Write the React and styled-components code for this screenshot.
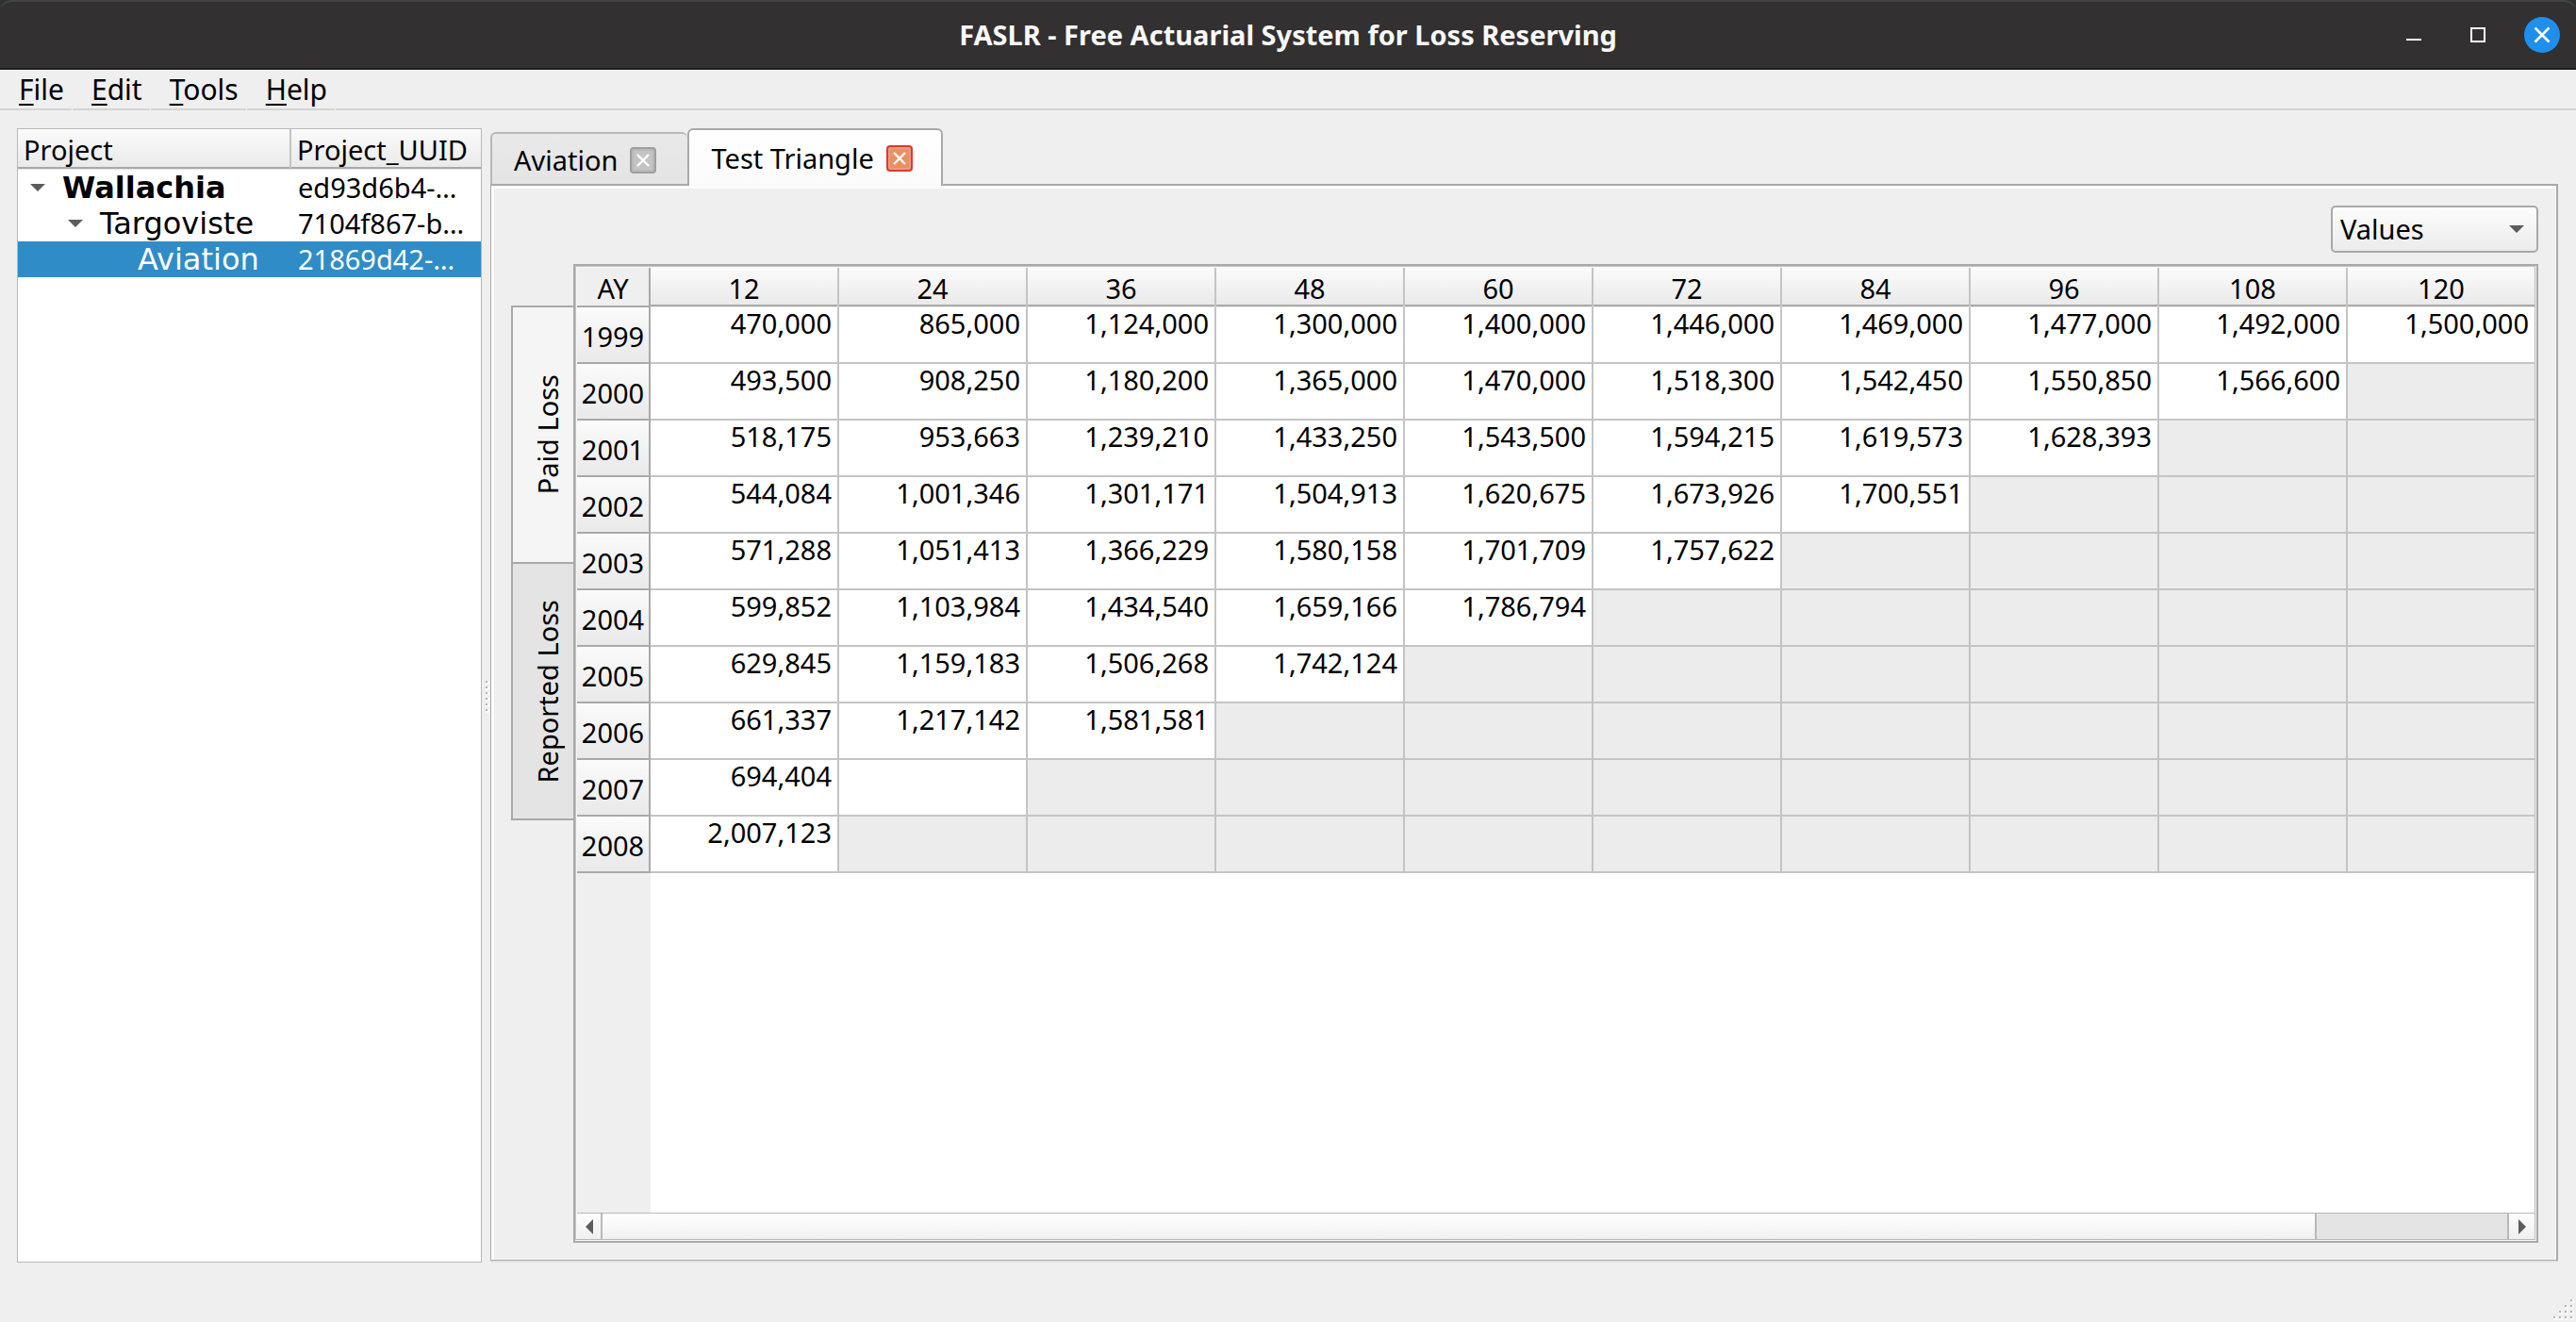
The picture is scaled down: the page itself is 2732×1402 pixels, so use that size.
import React, { useState } from "react";
import styled, { createGlobalStyle } from "styled-components";

const color = {
  window: "#efefef",
  title: "#323030",
  frame: "#a9a9a9",
  softFrame: "#b8b8b8",
  grid: "#c4c4c4",
  accent: "#308cc6",
  glyph: "#5c5c5c",
};
const headerFill = "linear-gradient(#fbfbfb, #f0f0f0 60%, #e9e9e9)";

const GlobalStyle = createGlobalStyle`
  *, *::before, *::after { box-sizing: border-box; }
  body {
    margin: 0;
    background: ${color.window};
    color: #000;
    font: 29px/34px "Noto Sans", "Open Sans", sans-serif;
  }
  button, select { font: inherit; color: inherit; }
  button { padding: 0; border: 0; background: none; }
`;

const Window = styled.div`
  display: flex;
  flex-direction: column;
  min-height: 100vh;
`;

const TitleBarBack = styled.div`
  background: #2b3135;
`;

const TitleBar = styled.header`
  display: grid;
  grid-template-columns: 1fr auto 1fr;
  align-items: center;
  height: 74px;
  padding: 0 17px;
  background: ${color.title};
  border-top: 2px solid #454344;
  border-bottom: 2px solid #1f1e1f;
  border-radius: 12px 12px 0 0;
`;

const Title = styled.h1`
  grid-column: 2;
  margin: 0;
  color: #f8f8f8;
  font-size: 29px;
  font-weight: 700;
`;

const WindowControls = styled.div`
  display: flex;
  justify-content: flex-end;
  gap: 30px;
`;

const WindowButton = styled.button`
  width: 38px;
  height: 38px;
  border-radius: 50%;
  background: ${(p) => (p.$accent ? "#1e8fec" : "transparent")};
  svg { display: block; }
`;

const MenuBar = styled.nav`
  display: flex;
  gap: 1px;
  height: 43px;
  font-size: 30px;
`;

const MenuItem = styled.button`
  padding: 0 8px 0 20px;
  border-bottom: 2px solid #d4d4d4;
  &::first-letter {
    text-decoration: underline;
    text-decoration-thickness: 2px;
    text-underline-offset: 4px;
  }
`;

const MenuRest = styled.div`
  flex: 1;
  border-bottom: 2px solid #d4d4d4;
`;

const Workspace = styled.main`
  flex: 1;
  display: flex;
  min-height: 0;
  padding: 19px 19px 0 18px;
`;

const TreePanel = styled.section`
  flex: 0 0 493px;
  border: 1px solid ${color.softFrame};
  background: #fff;
`;

const TreeTable = styled.table`
  width: 100%;
  table-layout: fixed;
  border-spacing: 0;
`;

const TreeHead = styled.th`
  height: 43px;
  padding: 2px 0 0 6px;
  text-align: left;
  font-weight: 400;
  background: ${headerFill};
  border-bottom: 1px solid #e6e6e6;
  box-shadow: inset 0 -2px 0 ${color.frame};
  & + & { border-left: 2px solid ${color.grid}; }
`;

const TreeRow = styled.tr`
  background: ${(p) => (p.$selected ? color.accent : "transparent")};
  color: ${(p) => (p.$selected ? "#fff" : "#000")};
`;

const TreeCell = styled.td`
  height: 38px;
  padding: 0 0 0 9px;
  white-space: nowrap;
`;

const TreeName = styled.div`
  display: flex;
  align-items: center;
  gap: 18px;
  padding-left: ${(p) => p.$level * 40 + (p.$leaf ? 38 : 4)}px;
  font-family: "DejaVu Sans", sans-serif;
  font-size: 32px;
  font-weight: ${(p) => (p.$strong ? 700 : 400)};
  svg { flex: none; }
`;

const Splitter = styled.div`
  flex: 0 0 9px;
  display: flex;
  flex-direction: column;
  align-items: center;
  justify-content: center;
  gap: 4px;
`;

const Dot = styled.i`
  width: 2px;
  height: 2px;
  background: #b4b4b4;
  box-shadow: 1px 1px 0 1px #f8f8f8;
`;

const Documents = styled.section`
  flex: 1;
  min-width: 0;
  display: flex;
  flex-direction: column;
  padding-bottom: 2px;
`;

const TabBar = styled.div`
  display: flex;
  align-items: flex-end;
  height: 59px;
`;

const DocumentTab = styled.div`
  display: flex;
  align-items: center;
  gap: 13px;
  height: ${(p) => (p.$active ? 61 : 55)}px;
  margin-bottom: ${(p) => (p.$active ? -2 : 0)}px;
  padding: ${(p) => (p.$active ? "0 30px 0 23px" : "3px 33px 0 23px")};
  border: 2px solid ${(p) => (p.$active ? color.frame : color.softFrame)};
  border-right-width: ${(p) => (p.$active ? 2 : 0)}px;
  border-bottom: 0;
  border-radius: 6px 6px 0 0;
  background: ${(p) => (p.$active ? "linear-gradient(#fff, #fbfbfb)" : "linear-gradient(#e9e9e9, #e4e4e4)")};
  z-index: ${(p) => (p.$active ? 1 : 0)};
`;

const CloseTab = styled.button`
  display: grid;
  place-items: center;
  width: 28px;
  height: 28px;
  border: 2px solid ${(p) => (p.$active ? "#df3a2b" : "#9f9f9f")};
  border-radius: 4px;
  background: ${(p) => (p.$active ? "#eb8f5f" : "#c4c4c4")};
  box-shadow: inset 0 0 0 2px ${(p) => (p.$active ? "#e99a88" : "#b9b9b9")};
`;

const Pane = styled.div`
  flex: 1;
  display: flex;
  flex-direction: column;
  gap: 12px;
  padding: 21px 19px 18px 21px;
  border: solid ${color.frame};
  border-width: 2px 2px 1px 1px;
  box-shadow: inset 3px 3px 0 #fcfcfc, inset -1px 0 0 #fcfcfc, 0 2px 0 #e4e4e4;
`;

const Toolbar = styled.div`
  display: flex;
  justify-content: flex-end;
`;

const ComboBox = styled.div`
  display: grid;
  align-items: center;
  width: 220px;
  height: 50px;
  border: 2px solid ${color.frame};
  border-radius: 5px;
  background: linear-gradient(#fdfdfd, #ebebeb);
  select, svg { grid-area: 1 / 1; }
  select {
    appearance: none;
    height: 46px;
    padding: 0 8px;
    border: 0;
    background: none;
  }
  svg { justify-self: end; margin-right: 13px; pointer-events: none; }
`;

const TriangleArea = styled.div`
  flex: 1;
  display: flex;
`;

const SideTabs = styled.div`
  flex: 0 0 66px;
  padding-top: 44px;
`;

const SideTab = styled.button`
  display: flex;
  align-items: center;
  justify-content: center;
  width: 66px;
  height: ${(p) => (p.$active ? 272 : 274)}px;
  padding: 0 0 0 10px;
  border: 2px solid ${color.frame};
  border-right: 0;
  border-bottom-width: ${(p) => (p.$active ? 0 : 2)}px;
  background: ${(p) => (p.$active ? "#f5f5f5" : "#e4e4e4")};
  span {
    writing-mode: vertical-rl;
    transform: rotate(180deg);
    white-space: nowrap;
  }
`;

const TableFrame = styled.div`
  flex: 1;
  min-width: 0;
  display: flex;
  flex-direction: column;
  border: 2px solid ${color.frame};
  padding: 2px;
  box-shadow:
    inset -1px -1px 0 #f7f7f7,
    inset 1px 1px 0 ${color.grid},
    inset -2px -2px 0 ${color.softFrame},
    inset 2px 2px 0 #f7f7f7;
`;

const TableView = styled.div`
  flex: 1;
  overflow: hidden;
  background: linear-gradient(90deg, ${color.window} 78px, #fff 78px);
`;

const Triangle = styled.table`
  width: 100%;
  table-layout: fixed;
  border-spacing: 0;
`;

const RowHeadCol = styled.col`
  width: 78px;
`;

const AgeCol = styled.col`
  width: ${(p) => (p.$last ? "auto" : "200px")};
`;

const Corner = styled.th`
  height: 42px;
  padding: 3px 0 0;
  font-weight: 400;
  background: ${color.window};
  border-right: 2px solid ${color.frame};
  border-bottom: 2px solid ${color.frame};
`;

const AgeHead = styled.th`
  height: 42px;
  padding: 2px 0 0;
  font-weight: 400;
  background: ${headerFill};
  border-bottom: 1px solid #e6e6e6;
  box-shadow: inset 0 -2px 0 ${color.frame};
  border-right: 2px solid ${color.grid};
  &:last-child { border-right: 0; }
`;

const YearHead = styled.th`
  height: 60px;
  padding: 3px 0 0;
  font-weight: 400;
  background: ${headerFill};
  border-right: 2px solid ${color.frame};
  border-bottom: 2px solid ${color.frame};
`;

const Cell = styled.td`
  height: 60px;
  padding: 0 6px 0 0;
  text-align: right;
  vertical-align: top;
  background: ${(p) => (p.$blank ? "#ececec" : "#fff")};
  border-right: 2px solid ${color.grid};
  border-bottom: 2px solid ${color.grid};
  &:last-child { border-right: 0; }
`;

const ScrollBar = styled.div`
  display: flex;
  height: 28px;
  border-top: 1px solid ${color.softFrame};
  background: #e4e4e4;
`;

const ScrollButton = styled.button`
  display: grid;
  place-items: center;
  width: ${(p) => (p.$end ? 29 : 27)}px;
  background: linear-gradient(#fdfdfd, #f0f0f0);
  border: solid ${color.softFrame};
  border-width: ${(p) => (p.$end ? "0 0 0 2px" : "0 2px 0 0")};
`;

const ScrollTrack = styled.div`
  flex: 1;
`;

const ScrollThumb = styled.div`
  width: 90%;
  height: 100%;
  border-right: 2px solid ${color.softFrame};
  background: linear-gradient(#fff, #f0f0f0);
`;

const StatusBar = styled.footer`
  display: flex;
  justify-content: flex-end;
  align-items: flex-end;
  height: 63px;
  padding: 0 4px 4px 0;
`;

const Grip = styled.div`
  display: grid;
  grid-template-columns: repeat(4, 2px);
  gap: 4px;
`;

const GripDot = styled(Dot)`
  visibility: ${(p) => (p.$shown ? "visible" : "hidden")};
`;

const projects = [
  { name: "Wallachia", id: "ed93d6b4-…", level: 0, strong: true },
  { name: "Targoviste", id: "7104f867-b…", level: 1 },
  { name: "Aviation", id: "21869d42-…", level: 2, selected: true, leaf: true },
];

const ages = [12, 24, 36, 48, 60, 72, 84, 96, 108, 120];

const losses = [
  [1999, 470000, 865000, 1124000, 1300000, 1400000, 1446000, 1469000, 1477000, 1492000, 1500000],
  [2000, 493500, 908250, 1180200, 1365000, 1470000, 1518300, 1542450, 1550850, 1566600],
  [2001, 518175, 953663, 1239210, 1433250, 1543500, 1594215, 1619573, 1628393],
  [2002, 544084, 1001346, 1301171, 1504913, 1620675, 1673926, 1700551],
  [2003, 571288, 1051413, 1366229, 1580158, 1701709, 1757622],
  [2004, 599852, 1103984, 1434540, 1659166, 1786794],
  [2005, 629845, 1159183, 1506268, 1742124],
  [2006, 661337, 1217142, 1581581],
  [2007, 694404, null],
  [2008, 2007123],
];

const DownArrow = () => (
  <svg width="16" height="8" viewBox="0 0 16 8" aria-hidden="true">
    <path d="M0 0h16L8 8z" fill={color.glyph} />
  </svg>
);

const SideArrow = ({ right }) => (
  <svg width="8" height="16" viewBox="0 0 8 16" aria-hidden="true">
    <path d={right ? "M0 0v16l8-8z" : "M8 0v16L0 8z"} fill={color.glyph} />
  </svg>
);

function ProjectTree() {
  return (
    <TreePanel aria-label="Projects">
      <TreeTable>
        <colgroup>
          <col width="288" />
          <col />
        </colgroup>
        <thead>
          <tr>
            <TreeHead scope="col">Project</TreeHead>
            <TreeHead scope="col">Project_UUID</TreeHead>
          </tr>
        </thead>
        <tbody>
          {projects.map((p) => (
            <TreeRow key={p.name} $selected={p.selected}>
              <TreeCell>
                <TreeName $level={p.level} $leaf={p.leaf} $strong={p.strong}>
                  {!p.leaf && <DownArrow />}
                  {p.name}
                </TreeName>
              </TreeCell>
              <TreeCell>{p.id}</TreeCell>
            </TreeRow>
          ))}
        </tbody>
      </TreeTable>
    </TreePanel>
  );
}

function DocTab({ label, active, onSelect }) {
  return (
    <DocumentTab $active={active}>
      <button role="tab" aria-selected={active} onClick={onSelect}>{label}</button>
      <CloseTab $active={active} aria-label={`Close ${label}`}>
        <svg width="14" height="14" viewBox="0 0 14 14" aria-hidden="true">
          <path d="M1 1l12 12M13 1L1 13" stroke="#fff" strokeWidth="2.4" />
        </svg>
      </CloseTab>
    </DocumentTab>
  );
}

function LossTriangle() {
  return (
    <TableFrame>
      <TableView>
        <Triangle>
          <colgroup>
            <RowHeadCol />
            {ages.map((a) => <AgeCol key={a} $last={a === 120} />)}
          </colgroup>
          <thead>
            <tr>
              <Corner scope="col">AY</Corner>
              {ages.map((a) => <AgeHead key={a} scope="col">{a}</AgeHead>)}
            </tr>
          </thead>
          <tbody>
            {losses.map(([year, ...values]) => (
              <tr key={year}>
                <YearHead scope="row">{year}</YearHead>
                {ages.map((a, i) => (
                  <Cell key={a} $blank={i >= values.length}>
                    {values[i] ? values[i].toLocaleString("en-US") : null}
                  </Cell>
                ))}
              </tr>
            ))}
          </tbody>
        </Triangle>
      </TableView>
      <ScrollBar>
        <ScrollButton aria-label="Scroll left"><SideArrow /></ScrollButton>
        <ScrollTrack><ScrollThumb /></ScrollTrack>
        <ScrollButton $end aria-label="Scroll right"><SideArrow right /></ScrollButton>
      </ScrollBar>
    </TableFrame>
  );
}

export default function App() {
  const [doc, setDoc] = useState("Test Triangle");
  const [side, setSide] = useState("Paid Loss");
  return (
    <Window>
      <GlobalStyle />
      <TitleBarBack>
        <TitleBar>
          <Title>FASLR - Free Actuarial System for Loss Reserving</Title>
          <WindowControls>
            <WindowButton aria-label="Minimize">
              <svg width="38" height="38" viewBox="0 0 38 38"><path d="M11 24h16" stroke="#fff" strokeWidth="2" /></svg>
            </WindowButton>
            <WindowButton aria-label="Maximize">
              <svg width="38" height="38" viewBox="0 0 38 38"><path d="M12 12h14v14H12z" fill="none" stroke="#fff" strokeWidth="2" /></svg>
            </WindowButton>
            <WindowButton $accent aria-label="Close">
              <svg width="38" height="38" viewBox="0 0 38 38"><path d="M11.500 11.500l15 15M26.500 11.500l-15 15" stroke="#fff" strokeWidth="2.600" /></svg>
            </WindowButton>
          </WindowControls>
        </TitleBar>
      </TitleBarBack>
      <MenuBar>
        {["File", "Edit", "Tools", "Help"].map((m) => <MenuItem key={m}>{m}</MenuItem>)}
        <MenuRest />
      </MenuBar>
      <Workspace>
        <ProjectTree />
        <Splitter>
          {[0, 1, 2, 3, 4, 5].map((d) => <Dot key={d} />)}
        </Splitter>
        <Documents>
          <TabBar role="tablist">
            {["Aviation", "Test Triangle"].map((t) => (
              <DocTab key={t} label={t} active={doc === t} onSelect={() => setDoc(t)} />
            ))}
          </TabBar>
          <Pane>
            <Toolbar>
              <ComboBox>
                <select aria-label="Display" defaultValue="Values">
                  <option>Values</option>
                </select>
                <DownArrow />
              </ComboBox>
            </Toolbar>
            <TriangleArea>
              <SideTabs role="tablist" aria-orientation="vertical">
                {["Paid Loss", "Reported Loss"].map((t) => (
                  <SideTab key={t} role="tab" aria-selected={side === t} $active={side === t} onClick={() => setSide(t)}>
                    <span>{t}</span>
                  </SideTab>
                ))}
              </SideTabs>
              <LossTriangle />
            </TriangleArea>
          </Pane>
        </Documents>
      </Workspace>
      <StatusBar>
        <Grip>
          {Array.from({ length: 16 }, (_, i) => (
            <GripDot key={i} $shown={(i % 4) + Math.floor(i / 4) >= 3} />
          ))}
        </Grip>
      </StatusBar>
    </Window>
  );
}
